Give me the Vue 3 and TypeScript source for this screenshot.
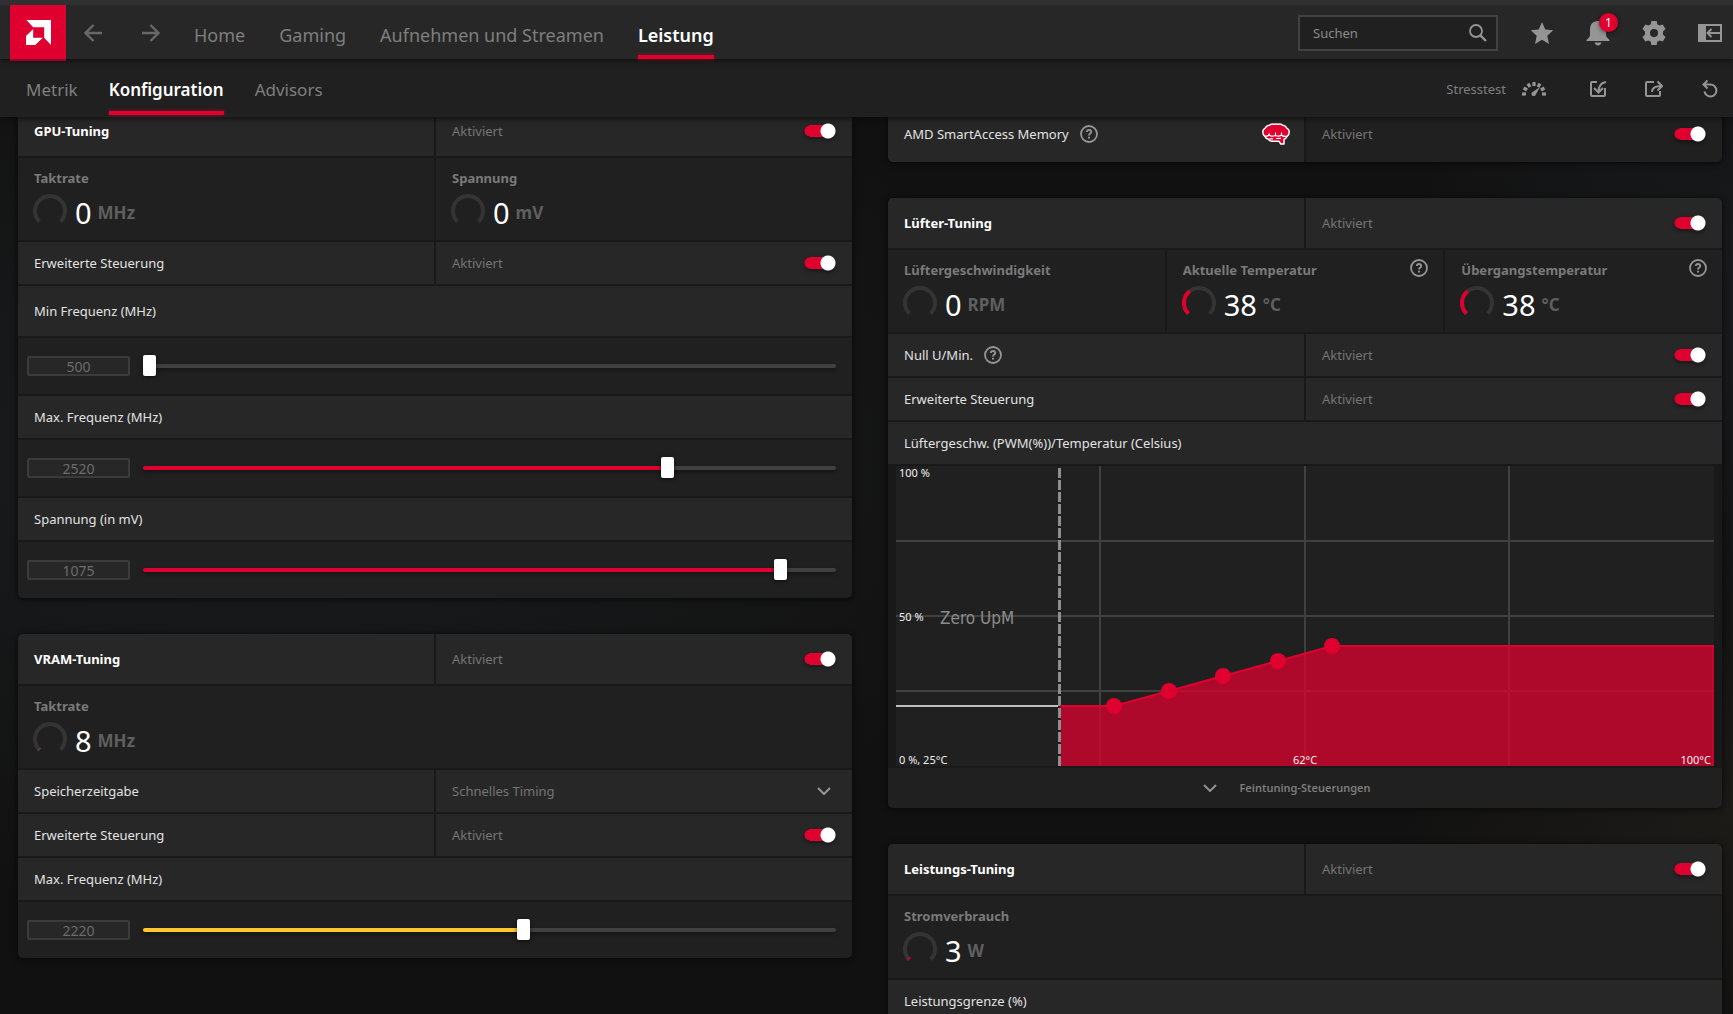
<script setup lang="ts">
import { reactive, ref } from 'vue'

interface Stat {
  label: string
  value: string
  unit: string
  level: number
  color?: string
  help?: boolean
}

type Row =
  | { kind: 'toggle'; id: string; label: string; on: boolean; size: 'header' | 'normal' | 'tall'; help?: boolean; brain?: boolean; title?: boolean }
  | { kind: 'stats'; items: Stat[] }
  | { kind: 'slider'; id: string; label: string; min: number; max: number; value: number; color: string; tall?: boolean }
  | { kind: 'select'; id: string; label: string; value: string; options: string[] }
  | { kind: 'caption'; label: string }
  | { kind: 'chart' }
  | { kind: 'more'; label: string }

interface Card {
  id: string
  rows: Row[]
}

const red = '#e0002f'
const yellow = '#ffc82c'

const columns = reactive<Card[][]>([
  [
    {
      id: 'gpu',
      rows: [
        { kind: 'toggle', id: 'gpu-on', label: 'GPU-Tuning', on: true, size: 'header', title: true },
        {
          kind: 'stats',
          items: [
            { label: 'Taktrate', value: '0', unit: 'MHz', level: 0 },
            { label: 'Spannung', value: '0', unit: 'mV', level: 0 },
          ],
        },
        { kind: 'toggle', id: 'gpu-adv', label: 'Erweiterte Steuerung', on: true, size: 'normal' },
        { kind: 'slider', id: 'gpu-min', label: 'Min Frequenz (MHz)', min: 500, max: 3150, value: 500, color: red, tall: true },
        { kind: 'slider', id: 'gpu-max', label: 'Max. Frequenz (MHz)', min: 500, max: 3150, value: 2520, color: red },
        { kind: 'slider', id: 'gpu-volt', label: 'Spannung (in mV)', min: 750, max: 1100, value: 1075, color: red },
      ],
    },
    {
      id: 'vram',
      rows: [
        { kind: 'toggle', id: 'vram-on', label: 'VRAM-Tuning', on: true, size: 'header', title: true },
        { kind: 'stats', items: [{ label: 'Taktrate', value: '8', unit: 'MHz', level: 1, color: '#7a6431' }] },
        { kind: 'select', id: 'vram-timing', label: 'Speicherzeitgabe', value: 'Schnelles Timing', options: ['Standard', 'Schnelles Timing'] },
        { kind: 'toggle', id: 'vram-adv', label: 'Erweiterte Steuerung', on: true, size: 'normal' },
        { kind: 'slider', id: 'vram-max', label: 'Max. Frequenz (MHz)', min: 2000, max: 2400, value: 2220, color: yellow },
      ],
    },
  ],
  [
    {
      id: 'sam',
      rows: [{ kind: 'toggle', id: 'sam-on', label: 'AMD SmartAccess Memory', on: true, size: 'tall', help: true, brain: true }],
    },
    {
      id: 'fan',
      rows: [
        { kind: 'toggle', id: 'fan-on', label: 'Lüfter-Tuning', on: true, size: 'header', title: true },
        {
          kind: 'stats',
          items: [
            { label: 'Lüftergeschwindigkeit', value: '0', unit: 'RPM', level: 0 },
            { label: 'Aktuelle Temperatur', value: '38', unit: '°C', level: 36, help: true },
            { label: 'Übergangstemperatur', value: '38', unit: '°C', level: 36, help: true },
          ],
        },
        { kind: 'toggle', id: 'fan-zero', label: 'Null U/Min.', on: true, size: 'normal', help: true },
        { kind: 'toggle', id: 'fan-adv', label: 'Erweiterte Steuerung', on: true, size: 'normal' },
        { kind: 'caption', label: 'Lüftergeschw. (PWM(%))/Temperatur (Celsius)' },
        { kind: 'chart' },
        { kind: 'more', label: 'Feintuning-Steuerungen' },
      ],
    },
    {
      id: 'power',
      rows: [
        { kind: 'toggle', id: 'power-on', label: 'Leistungs-Tuning', on: true, size: 'header', title: true },
        { kind: 'stats', items: [{ label: 'Stromverbrauch', value: '3', unit: 'W', level: 3, color: '#b8052b' }] },
        { kind: 'slider', id: 'power-limit', label: 'Leistungsgrenze (%)', min: -6, max: 15, value: 0, color: red },
      ],
    },
  ],
])

const mainTabs = ['Home', 'Gaming', 'Aufnehmen und Streamen', 'Leistung']
const subTabs = ['Metrik', 'Konfiguration', 'Advisors']
const search = ref('')
const dialTicks = [-90, -60, -30, 0, 30, 60, 90]

const curve = [
  { x: 218, y: 240 },
  { x: 273, y: 225 },
  { x: 327, y: 210 },
  { x: 382, y: 195 },
  { x: 436, y: 180 },
]
const curveLine = `164,240 ${curve.map((p) => `${p.x},${p.y}`).join(' ')} 818,180`

function fill(min: number, max: number, value: number): string {
  return `${((value - min) / (max - min)) * 100}%`
}
</script>

<template>
  <div class="app">
    <header class="top">
      <div class="bar">
        <a class="logo" href="#" aria-label="AMD">
          <svg viewBox="77 61 73 73" width="25" height="25">
            <path d="M78 61H150V134L130 113V82H98Z M98 87V113H126L104 134H77V108Z" fill="#fff" />
          </svg>
        </a>
        <div class="history">
          <button type="button" aria-label="Zurück">
            <svg viewBox="0 0 18 18" width="18" height="18" class="stroke"><path d="M18 9H2M9.500 1L1.500 9L9.500 17" stroke-width="2.400" /></svg>
          </button>
          <button type="button" aria-label="Vor">
            <svg viewBox="0 0 18 18" width="18" height="18" class="stroke"><path d="M0 9H16M8.500 1L16.500 9L8.500 17" stroke-width="2.400" /></svg>
          </button>
        </div>
        <nav class="tabs main-tabs">
          <a v-for="t in mainTabs" :key="t" href="#" :class="{ active: t === 'Leistung' }">{{ t }}</a>
        </nav>
        <label class="search">
          <input v-model="search" type="text" placeholder="Suchen" aria-label="Suchen" />
          <svg viewBox="0 0 18 18" width="18" height="18" class="stroke">
            <circle cx="7" cy="7" r="6" stroke-width="1.800" />
            <path d="M11.300 11.300L17 17" stroke-width="2.400" />
          </svg>
        </label>
        <div class="icons">
          <button type="button" aria-label="Favoriten">
            <svg viewBox="0 0 24 24" width="24" height="24"><path d="M12 1L15.300 8.500L23.200 9.300L17.300 14.800L19 23L12 18.800L5 23L6.700 14.800L.8 9.300L8.700 8.500Z" fill="currentColor" /></svg>
          </button>
          <button type="button" aria-label="Benachrichtigungen" class="bell">
            <svg viewBox="0 0 24 26" width="24" height="26">
              <path d="M12 1C6.500 1 4 5 4 9.500V15Q4 17 .5 20V21H23.500V20Q20 17 20 15V9.500C20 5 17.500 1 12 1Z M8.500 22.500H15.500Q14.500 25.500 12 25.500T8.500 22.500Z" fill="currentColor" />
            </svg>
            <span class="badge">1</span>
          </button>
          <button type="button" aria-label="Einstellungen">
            <svg viewBox="0 0 24 24" width="24" height="24">
              <path fill="currentColor" fill-rule="evenodd" d="M9.300 0H14.700L15.200 3.200L17.600 4.600L20.700 3.400L23.500 8.100L21 10.500V13.500L23.500 15.900L20.700 20.600L17.600 19.400L15.200 20.800L14.700 24H9.300L8.800 20.800L6.400 19.400L3.300 20.600L.5 15.900L3 13.500V10.500L.5 8.100L3.300 3.400L6.400 4.600L8.800 3.200Z M12 8A4 4 0 1 0 12 16A4 4 0 1 0 12 8Z" />
            </svg>
          </button>
          <button type="button" aria-label="Seitenleiste">
            <svg viewBox="0 0 24 18" width="24" height="18">
              <path fill="currentColor" fill-rule="evenodd" d="M0 0H24V18H0Z M8 2V16H22V2Z" />
              <path d="M22 9H9.500M13.500 5L9.500 9L13.500 13" stroke="currentColor" stroke-width="2" fill="none" />
            </svg>
          </button>
        </div>
      </div>
      <div class="subbar">
        <nav class="tabs sub-tabs">
          <a v-for="t in subTabs" :key="t" href="#" :class="{ active: t === 'Konfiguration' }">{{ t }}</a>
        </nav>
        <button type="button" class="stress">
          <span>Stresstest</span>
          <svg viewBox="0 0 24 16" width="24" height="16">
            <path v-for="angle in dialTicks" :key="angle" d="M12 1V5" stroke="currentColor" stroke-width="3.200" :transform="`rotate(${angle} 12 13)`" />
            <path d="M18 6L13.800 13.500A2.200 2.200 0 1 1 11 10.800Z" fill="currentColor" />
          </svg>
        </button>
        <div class="icons">
          <button type="button" aria-label="Importieren">
            <svg viewBox="0 0 18 18" width="18" height="18" class="stroke">
              <path d="M8 2H3Q2 2 2 3V15Q2 16 3 16H15Q16 16 16 15V8" stroke-width="2" />
              <path d="M17 2Q9.500 3 9.500 12M5 8L9.500 12.500L14 8" stroke-width="2" />
            </svg>
          </button>
          <button type="button" aria-label="Exportieren">
            <svg viewBox="0 0 18 18" width="18" height="18" class="stroke">
              <path d="M9 2H2Q1 2 1 3V15Q1 16 2 16H14Q15 16 15 15V11" stroke-width="2" />
              <path d="M7 12Q7 6 16.500 6M12.500 1.500L17 6L12.500 10.500" stroke-width="2" />
            </svg>
          </button>
          <button type="button" aria-label="Zurücksetzen">
            <svg viewBox="0 0 18 18" width="18" height="18" class="stroke">
              <path d="M6.500 .5L2.500 4.500L6.500 8.500M2.500 4.500H9.500A6 6 0 1 1 3.500 11.500" stroke-width="2" />
            </svg>
          </button>
        </div>
      </div>
    </header>

    <main class="content">
      <div v-for="(column, ci) in columns" :key="ci" class="column">
        <section v-for="card in column" :key="card.id" class="card">
          <template v-for="(row, ri) in card.rows" :key="ri">
            <div v-if="row.kind === 'toggle'" class="row split" :class="[row.size]">
              <div class="cell">
                <label :for="row.id" :class="{ title: row.title }">{{ row.label }}</label>
                <button v-if="row.help" type="button" class="help" aria-label="Hilfe">
                  <svg viewBox="0 0 18 18" width="18" height="18" class="stroke">
                    <circle cx="9" cy="9" r="8" stroke-width="1.800" />
                    <path d="M6.800 7Q6.800 5 9 5T11.200 7Q11.200 8 10 8.800Q9 9.500 9 10.600" stroke-width="1.800" />
                    <path d="M9 11.800V13.600" stroke-width="2" />
                  </svg>
                </button>
                <svg v-if="row.brain" class="brain" viewBox="0 0 28 22" width="28" height="22">
                  <path d="M7.500 2.200Q9.500 .6 12 1.300Q14 .5 16 1.300Q18.500 .6 20.500 2.200Q23.500 2.400 24.500 4.800Q27.300 6.300 27.200 9Q27.200 12 25 13.500Q24 16 22 16.200V21H18.800L17 18.300H11Q7.500 18.300 6 16Q3.800 15.800 3 13.500Q.8 12 .8 9Q.7 6.300 3.500 4.800Q4.500 2.400 7.500 2.200Z" fill="#e0002f" stroke="#fff" stroke-width="1.500" stroke-linejoin="round" />
                  <path d="M3 13Q6.500 14 7.500 10.500M7.500 12Q9.500 14 13.500 12.500V9.500M13.500 12.500Q17 14 19.500 12V9.500M19.500 12Q21.500 14 25 13M7.500 15.800H11M14 15.500L19 15.300" fill="none" stroke="#fff" stroke-width="1.200" />
                </svg>
              </div>
              <div class="cell state">
                <span>{{ row.on ? 'Aktiviert' : 'Deaktiviert' }}</span>
                <input :id="row.id" v-model="row.on" type="checkbox" class="switch" />
              </div>
            </div>

            <div v-else-if="row.kind === 'stats'" class="row stats">
              <div v-for="s in row.items" :key="s.label" class="stat">
                <div class="stat-head">
                  <h3>{{ s.label }}</h3>
                  <button v-if="s.help" type="button" class="help" aria-label="Hilfe">
                    <svg viewBox="0 0 18 18" width="18" height="18" class="stroke">
                      <circle cx="9" cy="9" r="8" stroke-width="1.800" />
                      <path d="M6.800 7Q6.800 5 9 5T11.200 7Q11.200 8 10 8.800Q9 9.500 9 10.600" stroke-width="1.800" />
                      <path d="M9 11.800V13.600" stroke-width="2" />
                    </svg>
                  </button>
                </div>
                <div class="reading">
                  <svg viewBox="0 0 34 34" width="34" height="34" fill="none" stroke-width="4">
                    <path d="M6.400 27.600A15 15 0 1 1 27.600 27.600" stroke="#343434" />
                    <path v-if="s.level > 0" d="M6.400 27.600A15 15 0 1 1 27.600 27.600" :stroke="s.color ?? red" pathLength="100" :stroke-dasharray="`${s.level} 200`" />
                  </svg>
                  <span class="value">{{ s.value }}</span>
                  <span class="unit">{{ s.unit }}</span>
                </div>
              </div>
            </div>

            <template v-else-if="row.kind === 'slider'">
              <div class="row cell" :class="row.tall ? 'header' : 'normal'">
                <label :for="row.id">{{ row.label }}</label>
              </div>
              <div class="row slider">
                <input v-model.number="row.value" type="text" class="number" :aria-label="row.label" />
                <input
                  :id="row.id"
                  v-model.number="row.value"
                  type="range"
                  class="range"
                  :min="row.min"
                  :max="row.max"
                  :style="{ '--fill': fill(row.min, row.max, row.value), '--tone': row.color }"
                />
              </div>
            </template>

            <div v-else-if="row.kind === 'select'" class="row split normal">
              <div class="cell"><label :for="row.id">{{ row.label }}</label></div>
              <div class="cell state choice">
                <select :id="row.id" v-model="row.value">
                  <option v-for="o in row.options" :key="o">{{ o }}</option>
                </select>
                <svg viewBox="0 0 14 8" width="14" height="8" class="stroke chevron"><path d="M1 1L7 7L13 1" stroke-width="2" /></svg>
              </div>
            </div>

            <div v-else-if="row.kind === 'caption'" class="row cell normal">
              <span>{{ row.label }}</span>
            </div>

            <div v-else-if="row.kind === 'chart'" class="chart">
              <svg viewBox="0 0 818 300" role="img" aria-label="Lüfterkurve">
                <rect width="818" height="300" fill="#202020" />
                <path d="M0 75H818M0 150H818M0 225H818M204 0V300M409 0V300M613 0V300" stroke="#404040" stroke-width="2" />
                <polygon :points="`${curveLine} 818,300 164,300`" :fill="red" fill-opacity="0.74" />
                <path d="M0 240H164" stroke="#bdbdbd" stroke-width="2" />
                <path d="M163.500 2V300" stroke="#202020" stroke-width="3" />
                <path d="M163.500 2V300" stroke="#8f8f8f" stroke-width="3" stroke-dasharray="10 2" />
                <polyline :points="curveLine" fill="none" :stroke="red" stroke-width="2" />
                <path d="M817 180V300" :stroke="red" />
                <circle v-for="p in curve" :key="p.x" :cx="p.x" :cy="p.y" r="8" :fill="red" />
                <g fill="#f0f0f0" font-size="11">
                  <text x="3" y="11">100 %</text>
                  <text x="3" y="155">50 %</text>
                  <text x="3" y="298">0 %, 25°C</text>
                  <text x="409" y="298" text-anchor="middle">62°C</text>
                  <text x="815" y="298" text-anchor="end">100°C</text>
                </g>
                <text class="zone" x="44" y="158">Zero UpM</text>
              </svg>
            </div>

            <button v-else type="button" class="more">
              <svg viewBox="0 0 14 8" width="14" height="8" class="stroke"><path d="M1 1L7 7L13 1" stroke-width="2" /></svg>
              <span>{{ row.label }}</span>
            </button>
          </template>
        </section>
      </div>
    </main>
  </div>
</template>

<style>
body {
  margin: 0;
  background: #121212;
}
</style>

<style scoped>
.app {
  height: 100vh;
  display: flex;
  flex-direction: column;
  overflow: hidden;
  font: 13px/20px "Noto Sans", "Open Sans", sans-serif;
  color: #e2e2e2;
  background:
    radial-gradient(ellipse 50% 45% at 15% 45%, #1b1c1e, transparent),
    radial-gradient(ellipse 20% 40% at 100% 30%, #191a1d, transparent),
    radial-gradient(ellipse 20% 25% at 100% 80%, #1d1b18, transparent),
    #111;
}
.app * {
  box-sizing: border-box;
}
button {
  display: flex;
  align-items: center;
  justify-content: center;
  padding: 0;
  border: 0;
  background: none;
  color: inherit;
  font: inherit;
}
a {
  color: inherit;
  text-decoration: none;
}
.stroke {
  fill: none;
  stroke: currentColor;
}

.top {
  position: relative;
  z-index: 1;
  flex: none;
  color: #959595;
}
.bar {
  position: relative;
  z-index: 1;
  height: 59px;
  padding: 2px 11px 0 10px;
  border-top: 5px solid #303030;
  display: flex;
  align-items: center;
  background: #272727;
  box-shadow: 0 1px 6px #0c0c0c;
}
.logo {
  align-self: flex-start;
  flex: none;
  width: 56px;
  height: 56px;
  margin-top: -2px;
  display: grid;
  place-items: center;
  background: #e0002f;
  border-bottom: 2px solid #96042a;
}
.history {
  display: flex;
  gap: 40px;
  margin: 0 34px 0 18px;
  color: #686868;
}
.tabs {
  display: flex;
  align-self: stretch;
  color: #7f7f7f;
  white-space: nowrap;
}
.tabs a {
  display: flex;
  align-items: center;
  border-bottom: 4px solid transparent;
}
.tabs .active {
  position: relative;
  color: #fff;
  font-weight: 600;
}
.tabs .active::after {
  content: "";
  position: absolute;
  left: 0;
  right: 0;
  bottom: -4px;
  height: 4px;
  background: #e0002f;
  box-shadow: 0 0 4px #e0002f99;
}
.main-tabs {
  gap: 34px;
  font-size: 18px;
  padding-top: 8px;
}
.search {
  display: flex;
  align-items: center;
  width: 200px;
  height: 36px;
  margin: 0 32px 0 auto;
  padding: 0 9px 0 13px;
  border: 2px solid #414141;
  background: #202020;
}
.search input {
  flex: 1;
  min-width: 0;
  padding: 0;
  border: 0;
  outline: 0;
  background: none;
  color: inherit;
  font: inherit;
}
.search input::placeholder {
  color: #8a8a8a;
  opacity: 1;
}
.icons {
  display: flex;
  align-items: center;
  gap: 32px;
}
.icons button {
  width: 24px;
  height: 26px;
}
.bell {
  position: relative;
}
.badge {
  position: absolute;
  left: 13px;
  top: -7px;
  width: 19px;
  height: 19px;
  border-radius: 50%;
  background: #e0002f;
  color: #fff;
  font-size: 12px;
  line-height: 19px;
  text-align: center;
  box-shadow: 0 1px 4px #0008;
}
.subbar {
  height: 58px;
  padding: 2px 11px 0 26px;
  display: flex;
  align-items: center;
  background: #202020;
  box-shadow: 0 1px 6px #0c0c0c;
}
.sub-tabs {
  gap: 31px;
  font-size: 17px;
  padding: 8px 0 2px;
}
.stress {
  gap: 16px;
  margin: 0 40px 0 auto;
}
.stress span {
  color: #7f7f7f;
}

.content {
  flex: 1;
  min-height: 0;
  display: grid;
  grid-template-columns: 1fr 1fr;
  align-items: start;
  gap: 36px;
  padding: 0 11px 0 18px;
  margin-top: -11px;
  overflow: hidden;
}
.column {
  display: grid;
  gap: 36px;
  min-width: 0;
}
.card {
  display: grid;
  gap: 2px;
  border-radius: 5px;
  overflow: hidden;
  background: #191919;
  box-shadow: 0 1px 6px #080808;
}
.header {
  height: 50px;
}
.normal {
  height: 42px;
}
.tall {
  height: 56px;
}
.split {
  display: grid;
  grid-template-columns: 1fr 1fr;
  gap: 2px;
}
.cell {
  display: flex;
  align-items: center;
  padding: 0 16px;
  background: #272727;
}
.title {
  color: #fff;
  font-weight: 700;
}
.state {
  justify-content: space-between;
  color: #757575;
}
.tall .state {
  background: #202020;
}
.help {
  margin-left: 11px;
  color: #959595;
}
.brain {
  margin: 0 -2px 0 auto;
}
.switch {
  appearance: none;
  width: 32px;
  height: 16px;
  margin: 0;
  background:
    radial-gradient(circle at 24px 8px, #fff 7px, transparent 8px),
    linear-gradient(#e0002f, #e0002f) 6px 2px / 18px 12px no-repeat,
    radial-gradient(circle at 6px 8px, #e0002f 5px, transparent 6px);
  filter: drop-shadow(0 2px 2px #0006);
}
.switch:not(:checked) {
  background:
    radial-gradient(circle at 8px 8px, #fff 7px, transparent 8px),
    linear-gradient(#555, #555) 8px 2px / 18px 12px no-repeat,
    radial-gradient(circle at 26px 8px, #555 5px, transparent 6px);
}

.stats {
  display: grid;
  grid-auto-flow: column;
  grid-auto-columns: 1fr;
  gap: 2px;
  height: 82px;
}
.stat {
  padding: 9px 15px 0 16px;
  background: #202020;
}
.stat-head {
  display: flex;
  justify-content: space-between;
  height: 22px;
}
.stat-head h3 {
  margin: 0;
  font-size: 13px;
  line-height: 22px;
  font-weight: 700;
  color: #7a7a7a;
}
.stat-head .help {
  height: 18px;
}
.reading {
  display: flex;
  align-items: flex-start;
  height: 40px;
  padding-top: 5px;
  margin-left: -1px;
}
.value {
  margin-left: 8px;
  font-size: 29px;
  line-height: 38px;
  color: #fff;
}
.unit {
  margin-left: 6px;
  font-size: 17px;
  line-height: 38px;
  font-weight: 700;
  color: #5f5f5f;
}

.slider {
  display: flex;
  align-items: center;
  gap: 13px;
  height: 56px;
  padding: 0 16px 0 9px;
  background: #202020;
}
.number {
  width: 103px;
  height: 20px;
  padding: 0;
  border: 2px solid #3b3b3b;
  border-radius: 2px;
  background: #272727;
  color: #6c6c6c;
  font: inherit;
  font-size: 14px;
  line-height: 16px;
  text-align: center;
}
.range {
  appearance: none;
  flex: 1;
  min-width: 0;
  height: 21px;
  margin: 0;
  background: none;
}
.range::-webkit-slider-runnable-track {
  height: 4px;
  border-radius: 2px;
  background: linear-gradient(to right, var(--tone) var(--fill), #404040 var(--fill));
  box-shadow: 0 2px 4px #0006;
}
.range::-webkit-slider-thumb {
  appearance: none;
  width: 13px;
  height: 21px;
  margin-top: -9px;
  border-radius: 2px;
  background: #fff;
  box-shadow: 0 1px 4px #0009;
}

.choice {
  position: relative;
}
.choice select {
  appearance: none;
  flex: 1;
  padding: 0;
  border: 0;
  outline: 0;
  background: none;
  color: inherit;
  font: inherit;
}
.chevron {
  position: absolute;
  right: 21px;
  color: #959595;
  pointer-events: none;
}
.chart {
  padding: 0 8px;
}
.chart svg {
  display: block;
  width: 100%;
}
.zone {
  font-family: "DejaVu Sans Condensed", "Noto Sans", sans-serif;
  font-size: 17px;
  fill: #8c8c8c;
}
.more {
  height: 40px;
  gap: 22px;
  padding: 0 36px 0 0;
  background: #202020;
  color: #8f8f8f;
}
.more span {
  font-size: 11px;
  font-weight: 600;
  color: #7c7c7c;
}
</style>
